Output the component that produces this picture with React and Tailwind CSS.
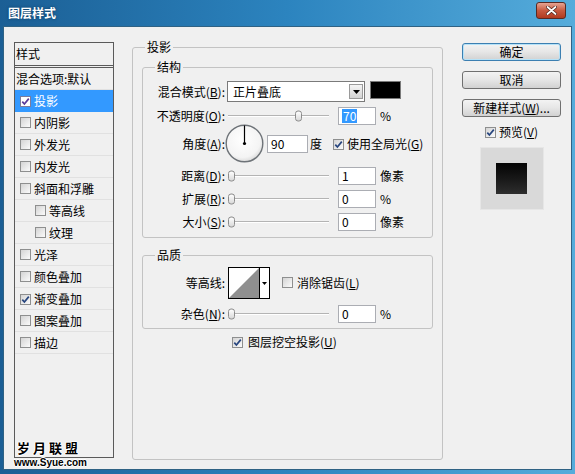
import React from "react";

function Check({ checked = false, onBlue = false }) {
  return (
    <span
      className={
        onBlue
          ? "inline-flex shrink-0 items-center justify-center w-[11px] h-[11px] border border-[#7c7c9c] bg-white"
          : "inline-flex shrink-0 items-center justify-center w-[11px] h-[11px] border border-[#8e8f8f] bg-linear-to-br from-[#d4d4d4] to-[#fbfbfb]"
      }
    >
      {checked && (
        <svg width="9" height="9" viewBox="0 0 9 9">
          <path d="M1.3 4.6 L3.4 7 L7.8 1.6" fill="none" stroke={onBlue ? "#5a3a9a" : "#27457e"} strokeWidth="1.7" />
        </svg>
      )}
    </span>
  );
}

function ListRow({ children, checked, nested, selected }) {
  return (
    <div
      className={
        selected
          ? "h-[22px] flex items-center bg-[#3399ff] text-white"
          : "h-[22px] flex items-center border-b border-[#e1e1e1]"
      }
    >
      <span className={nested ? "ml-[20px]" : "ml-[5px]"}>
        <Check checked={checked} onBlue={selected} />
      </span>
      <span className="ml-[3px] leading-none">{children}</span>
    </div>
  );
}

function Slider({ pos }) {
  return (
    <div className="relative ml-[3px] w-[101px] h-full flex items-center">
      <div className="w-full flex flex-col">
        <div className="h-[1px] bg-[#b4b4b4]" />
        <div className="h-[1px] bg-white" />
      </div>
      <span
        className="absolute top-1/2 -translate-y-1/2 w-[7px] h-[11px] rounded-[3px] border border-[#8c8c8c] bg-linear-to-b from-white to-[#d9d9d9]"
        style={{ left: pos }}
      />
    </div>
  );
}

function Field({ children, w = "w-[38px]", ml = "ml-[9px]" }) {
  return (
    <div className={`${ml} ${w} h-[18px] border border-[#abadb3] bg-white flex items-center pl-[3px] leading-none`}>
      {children}
    </div>
  );
}

function Label({ children }) {
  return <div className="w-[82px] shrink-0 text-right leading-none">{children}</div>;
}

function U({ children }) {
  return <span className="underline underline-offset-1">{children}</span>;
}

function Button({ children, def, mt }) {
  return (
    <div
      className={
        def
          ? `${mt} w-[99px] h-[18px] rounded-[3px] border border-[#3c7fb1] shadow-[inset_0_0_0_1px_#b5e2f8] bg-linear-to-b from-[#f3f3f3] via-[#e6e6e6] to-[#d2d2d2] flex items-center justify-center leading-none`
          : `${mt} w-[99px] h-[18px] rounded-[3px] border border-[#707070] bg-linear-to-b from-[#f3f3f3] via-[#e6e6e6] to-[#d2d2d2] flex items-center justify-center leading-none`
      }
    >
      {children}
    </div>
  );
}

export default function App() {
  return (
    <div className="w-[575px] h-[474px] flex flex-col px-[3px] pb-[4px] bg-linear-to-r from-[#1b5f95] via-[#2c84bf] to-[#55acdb] font-['Noto_Sans_CJK_SC','Noto_Sans',sans-serif] text-[12px] text-black overflow-hidden">
      {/* title bar */}
      <div className="h-[26px] shrink-0 flex items-start justify-between pl-[5px] pr-[6px]">
        <span className="mt-[6px] text-white font-bold text-[12px] leading-[14px] [text-shadow:0_0_3px_#0b3a5e]">
          图层样式
        </span>
        <div className="mt-[2px] w-[30px] h-[17px] rounded-[3px] border border-[#5a2a22] bg-linear-to-b from-[#e5a493] via-[#c75a40] to-[#b03a1f] flex items-center justify-center">
          <svg width="11" height="9" viewBox="0 0 11 9">
            <path d="M1.5 1 L9.5 8 M9.5 1 L1.5 8" stroke="#4a2018" strokeWidth="3.2" strokeLinecap="round" />
            <path d="M1.5 1 L9.5 8 M9.5 1 L1.5 8" stroke="#ffffff" strokeWidth="1.8" strokeLinecap="round" />
          </svg>
        </div>
      </div>

      {/* client */}
      <div className="flex-1 bg-[#f0f0f0] border border-[#2f6284] flex items-start pl-[10px]">
        {/* left list */}
        <div className="relative mt-[15px] w-[100px] h-[416px]">
          <div className="w-full h-full border border-[#5a5a5a] flex flex-col">
            <div className="h-[25px] shrink-0 border-b-[3px] border-double border-[#5a5a5a] flex items-center pl-[1px] leading-none">
              样式
            </div>
            <div className="h-[22px] flex items-center pl-[1px] border-b border-[#e1e1e1] leading-none">混合选项:默认</div>
            <ListRow checked selected>投影</ListRow>
            <ListRow>内阴影</ListRow>
            <ListRow>外发光</ListRow>
            <ListRow>内发光</ListRow>
            <ListRow>斜面和浮雕</ListRow>
            <ListRow nested>等高线</ListRow>
            <ListRow nested>纹理</ListRow>
            <ListRow>光泽</ListRow>
            <ListRow>颜色叠加</ListRow>
            <ListRow checked>渐变叠加</ListRow>
            <ListRow>图案叠加</ListRow>
            <ListRow>描边</ListRow>
          </div>
          <div className="absolute left-[3px] top-[399px] h-[14px] text-[13px] font-bold leading-[14px] tracking-[3px] whitespace-nowrap [text-shadow:1px_0_0_#fff,-1px_0_0_#fff,0_1px_0_#fff,0_-1px_0_#fff]">
            岁月联盟
          </div>
          <div className="absolute left-0 top-[415px] h-[11px] text-[10px] font-bold leading-[11px] whitespace-nowrap font-['Liberation_Sans',sans-serif] [text-shadow:1px_0_0_#fff,-1px_0_0_#fff,0_1px_0_#fff,0_-1px_0_#fff]">
            www.Syue.com
          </div>
        </div>

        {/* middle */}
        <fieldset className="mt-[13px] ml-[18px] w-[311px] h-[420px] border border-[#c3c3c3] rounded-[3px]">
          <legend className="ml-[12px] px-[2px] leading-[14px]">投影</legend>

          <fieldset className="mt-[6px] ml-[9px] w-[291px] border border-[#c3c3c3] rounded-[3px] pb-[6px]">
            <legend className="ml-[12px] px-[2px] leading-[14px]">结构</legend>

            <div className="mt-[7px] h-[21px] flex items-start">
              <div className="h-[21px] flex items-center">
                <Label>
                  混合模式(<U>B</U>):
                </Label>
              </div>
              <div className="ml-[2px] w-[138px] h-[21px] border border-[#7a7a7a] bg-white flex items-center justify-between">
                <span className="pl-[5px] leading-none">正片叠底</span>
                <span className="mr-[1px] w-[14px] h-[15px] border border-[#9a9a9a] bg-linear-to-b from-[#f4f4f4] to-[#d4d4d4] flex items-center justify-center">
                  <svg width="7" height="4" viewBox="0 0 7 4">
                    <path d="M0 0 L7 0 L3.5 4 Z" fill="#000" />
                  </svg>
                </span>
              </div>
              <div className="ml-[5px] w-[31px] h-[18px] bg-black border border-[#7a7a7a]" />
            </div>

            <div className="mt-[5px] h-[18px] flex items-center">
              <Label>
                不透明度(<U>O</U>):
              </Label>
              <Slider pos={67} />
              <Field>
                <span className="bg-[#3399ff] text-white px-[1px] py-[1px]">70</span>
              </Field>
              <span className="ml-[4px] leading-none">%</span>
            </div>

            <div className="-mt-[1px] h-[39px] flex items-center">
              <Label>
                角度(<U>A</U>):
              </Label>
              <svg width="39" height="39" viewBox="0 0 39 39" className="shrink-0">
                <defs>
                  <radialGradient id="dialg" cx="45%" cy="40%" r="60%">
                    <stop offset="0%" stopColor="#ffffff" />
                    <stop offset="80%" stopColor="#f4f4f4" />
                    <stop offset="100%" stopColor="#dcdcdc" />
                  </radialGradient>
                </defs>
                <circle cx="19.5" cy="19.5" r="18.3" fill="url(#dialg)" stroke="#6e7378" strokeWidth="1.4" />
                <line x1="19.5" y1="19.5" x2="19.5" y2="1.5" stroke="#000" strokeWidth="1.2" />
                <circle cx="19.5" cy="19.5" r="1.6" fill="#000" />
              </svg>
              <Field w="w-[41px]" ml="ml-[3px]">90</Field>
              <span className="ml-[2px] leading-none">度</span>
              <span className="ml-[11px]">
                <Check checked />
              </span>
              <span className="ml-[3px] leading-none">
                使用全局光(<U>G</U>)
              </span>
            </div>

            <div className="mt-[4px] h-[18px] flex items-center">
              <Label>
                距离(<U>D</U>):
              </Label>
              <Slider pos={0} />
              <Field>1</Field>
              <span className="ml-[4px] leading-none">像素</span>
            </div>

            <div className="mt-[5px] h-[18px] flex items-center">
              <Label>
                扩展(<U>R</U>):
              </Label>
              <Slider pos={0} />
              <Field>0</Field>
              <span className="ml-[4px] leading-none">%</span>
            </div>

            <div className="mt-[5px] h-[18px] flex items-center">
              <Label>
                大小(<U>S</U>):
              </Label>
              <Slider pos={0} />
              <Field>0</Field>
              <span className="ml-[4px] leading-none">像素</span>
            </div>
          </fieldset>

          <fieldset className="mt-[10px] ml-[9px] w-[291px] border border-[#c3c3c3] rounded-[3px] pb-[5px]">
            <legend className="ml-[12px] px-[2px] leading-[14px]">品质</legend>

            <div className="mt-[5px] h-[32px] flex items-center">
              <Label>等高线:</Label>
              <div className="ml-[3px] w-[42px] h-[32px] border border-black bg-white flex">
                <svg width="30" height="30" viewBox="0 0 30 30" className="shrink-0">
                  <path d="M0 30 L30 0 L30 30 Z" fill="#8f8f8f" />
                </svg>
                <div className="flex-1 border-l border-black flex items-center justify-center">
                  <svg width="5" height="3" viewBox="0 0 5 3">
                    <path d="M0 0 L5 0 L2.5 3 Z" fill="#000" />
                  </svg>
                </div>
              </div>
              <span className="ml-[12px]">
                <Check />
              </span>
              <span className="ml-[4px] leading-none">
                消除锯齿(<U>L</U>)
              </span>
            </div>

            <div className="mt-[6px] h-[18px] flex items-center">
              <Label>
                杂色(<U>N</U>):
              </Label>
              <Slider pos={0} />
              <Field>0</Field>
              <span className="ml-[4px] leading-none">%</span>
            </div>
          </fieldset>

          <div className="mt-[6px] h-[14px] flex items-center pl-[99px]">
            <Check checked />
            <span className="ml-[5px] leading-none">
              图层挖空投影(<U>U</U>)
            </span>
          </div>
        </fieldset>

        {/* right */}
        <div className="mt-[16px] ml-[19px] w-[99px] flex flex-col items-center">
          <Button def mt="mt-0">确定</Button>
          <Button mt="mt-[10px]">取消</Button>
          <Button mt="mt-[10px]">
            新建样式(<U>W</U>)...
          </Button>
          <div className="mt-[8px] h-[14px] flex items-center">
            <Check checked />
            <span className="ml-[3px] leading-none">
              预览(<U>V</U>)
            </span>
          </div>
          <div className="mt-[8px] w-[64px] h-[63px] bg-[#d9d9d9] border border-[#e6e6e6] flex items-center justify-center">
            <div className="w-[31px] h-[31px] bg-linear-to-b from-[#050505] to-[#2e2e2e]" />
          </div>
        </div>
      </div>
    </div>
  );
}
